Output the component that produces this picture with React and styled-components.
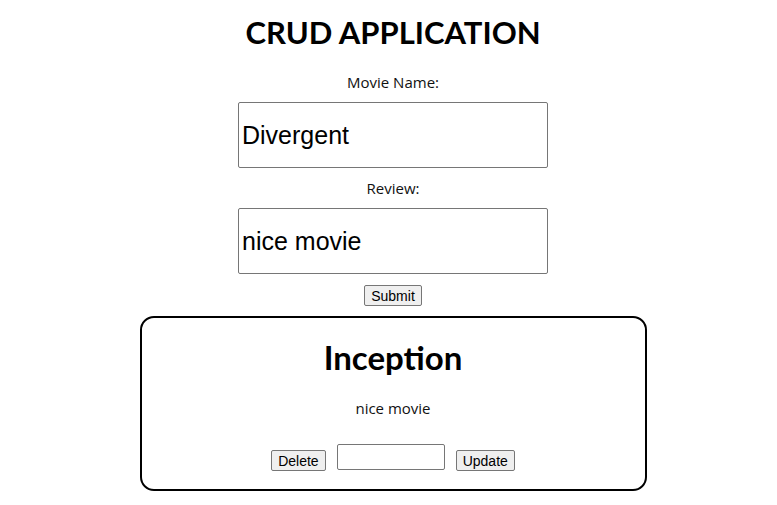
import React from "react";
import styled, { createGlobalStyle } from "styled-components";

const GlobalStyle = createGlobalStyle`
  body {
    margin: 0;
    background: #ffffff;
    font-family: "Open Sans", sans-serif;
    color: #000;
  }
`;

const Wrapper = styled.div`
  display: flex;
  flex-direction: column;
  align-items: center;
  padding-top: 12px;
  padding-left: 9px;
`;

const Title = styled.h1`
  margin: 0;
  font-size: 31px;
  font-weight: bold;
  font-family: "Lato", sans-serif;
  line-height: 40px;
`;

const Form = styled.div`
  display: flex;
  flex-direction: column;
  align-items: center;
  margin-top: 21px;
`;

const Label = styled.label`
  font-size: 15px;
  line-height: 18px;
  color: #111;
  margin-bottom: 11px;
`;

const BigInput = styled.input`
  box-sizing: border-box;
  width: 310px;
  height: 66px;
  font-family: "Liberation Sans", Arial, sans-serif;
  font-size: 25px;
  padding: 0 3px;
  border: 1px solid #767676;
  border-radius: 2px;
  margin-bottom: 11px;
  color: #000;
`;

const Button = styled.button`
  font-family: "Liberation Sans", Arial, sans-serif;
  font-size: 14px;
  height: 21px;
  padding: 1px 6px;
  background: #efefef;
  border: 1px solid #767676;
  border-radius: 2px;
  color: #000;
`;

const Card = styled.div`
  box-sizing: border-box;
  width: 507px;
  margin-top: 10px;
  border: 2px solid #000;
  border-radius: 14px;
  display: flex;
  flex-direction: column;
  align-items: center;
  padding: 19px 0 18px;
`;

const CardTitle = styled.h2`
  margin: 0;
  font-family: "Lato", sans-serif;
  font-size: 33px;
  font-weight: bold;
  line-height: 40px;
`;

const CardText = styled.p`
  margin: 22px 0 0;
  font-size: 15px;
  line-height: 18px;
  color: #111;
`;

const Actions = styled.div`
  display: flex;
  align-items: flex-end;
  gap: 11px;
  margin-top: 27px;
`;

const SmallInput = styled.input`
  box-sizing: border-box;
  width: 108px;
  height: 26px;
  border: 1px solid #767676;
  border-radius: 2px;
  margin-bottom: 1px;
`;

const App = () => {
  return (
    <Wrapper>
      <GlobalStyle />
      <Title>CRUD APPLICATION</Title>
      <Form>
        <Label>Movie Name:</Label>
        <BigInput defaultValue="Divergent" />
        <Label>Review:</Label>
        <BigInput defaultValue="nice movie" />
        <Button>Submit</Button>
      </Form>
      <Card>
        <CardTitle>Inception</CardTitle>
        <CardText>nice movie</CardText>
        <Actions>
          <Button>Delete</Button>
          <SmallInput />
          <Button>Update</Button>
        </Actions>
      </Card>
    </Wrapper>
  );
};

export default App;
